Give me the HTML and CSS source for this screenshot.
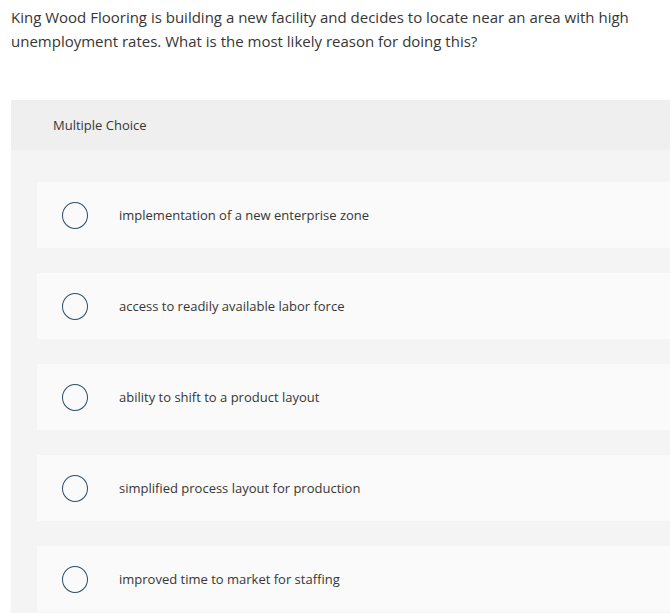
FILE: index.html
```html
<!DOCTYPE html>
<html>
<head>
<meta charset="utf-8">
<link rel="stylesheet" href="styles.css">
</head>
<body>
<p class="question">King Wood Flooring is building a new facility and decides to locate near an area with high unemployment rates. What is the most likely reason for doing this?</p>
<div class="panel">
  <div class="panel-header">Multiple Choice</div>
  <ul class="options">
    <li class="option"><span class="radio"></span><span class="label">implementation of a new enterprise zone</span></li>
    <li class="option"><span class="radio"></span><span class="label">access to readily available labor force</span></li>
    <li class="option"><span class="radio"></span><span class="label">ability to shift to a product layout</span></li>
    <li class="option"><span class="radio"></span><span class="label">simplified process layout for production</span></li>
    <li class="option"><span class="radio"></span><span class="label">improved time to market for staffing</span></li>
  </ul>
</div>
</body>
</html>
```
FILE: styles.css
```css
html, body {
  margin: 0;
  padding: 0;
  background: #ffffff;
  overflow: hidden;
}
body {
  font-family: "Open Sans", "Liberation Sans", sans-serif;
  color: #333333;
}
.question {
  margin: 0;
  padding: 5px 20px 0 11px;
  font-size: 15px;
  line-height: 24px;
  height: 95px;
  color: #363636;
}
.panel {
  margin-left: 11px;
  background: #f4f4f4;
  height: 518px;
}
.panel-header {
  height: 50px;
  line-height: 50px;
  padding-left: 42px;
  background: #efefef;
  font-size: 13px;
  color: #363636;
}
.options {
  list-style: none;
  margin: 0;
  padding: 32px 0 0 26px;
  display: flex;
  flex-direction: column;
  gap: 25px;
}
.option {
  height: 66px;
  background: #fafafa;
  display: flex;
  align-items: center;
  padding-left: 25px;
}
.radio {
  width: 24px;
  height: 25px;
  border: 1.5px solid #2e4d65;
  border-radius: 50%;
  box-sizing: content-box;
  flex: none;
}
.label {
  margin-left: 31px;
  font-size: 13px;
  color: #363636;
}
```
